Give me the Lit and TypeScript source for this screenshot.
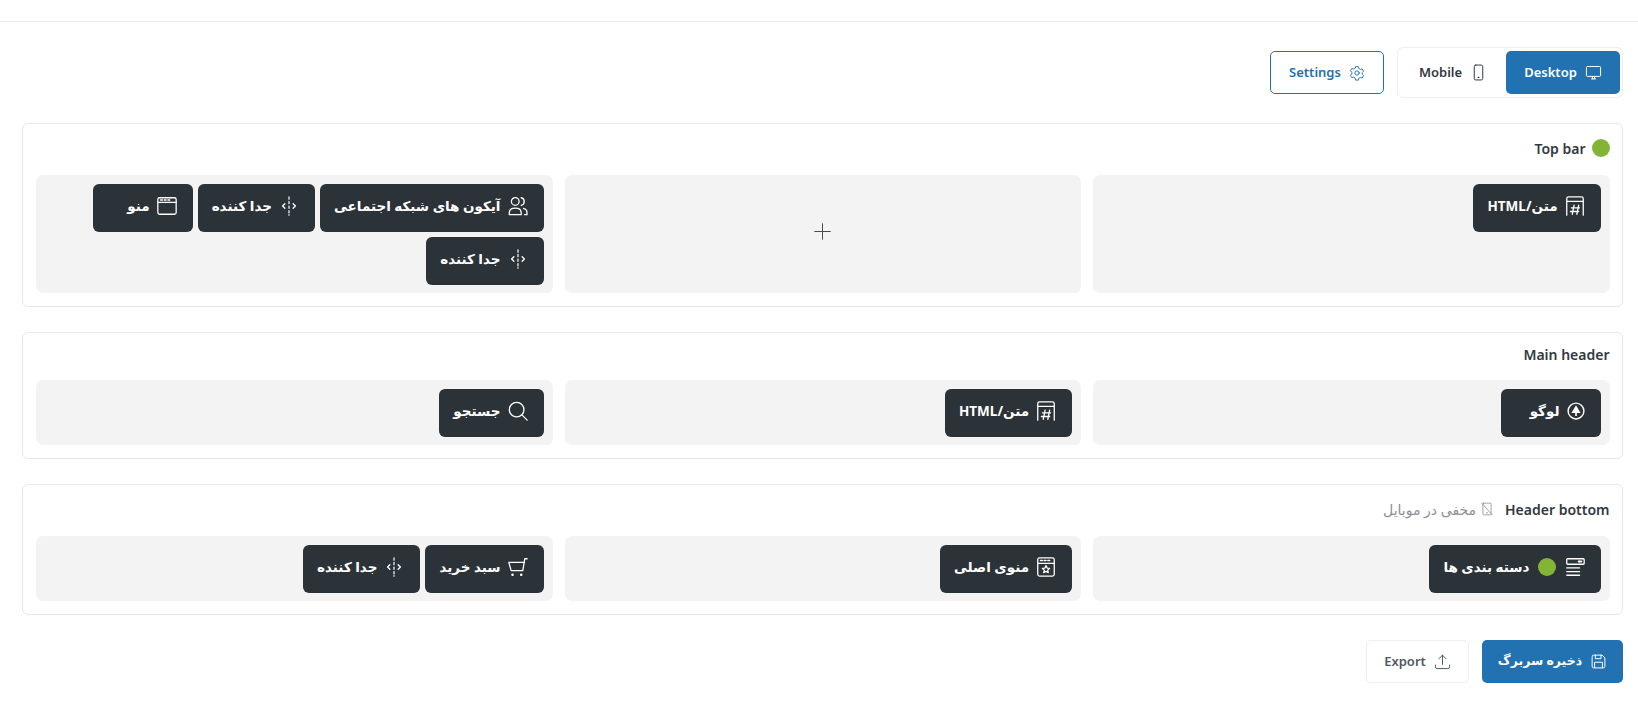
import { LitElement, html, css, svg, nothing } from 'lit';
import { customElement } from 'lit/decorators.js';

const icon = (body: unknown, size = 22) => html`
  <svg class="ico" width=${size} height=${size} viewBox="0 0 24 24" fill="none" stroke="currentColor" stroke-width="1.4" stroke-linecap="round" stroke-linejoin="round">${body}</svg>
`;

const icons: Record<string, unknown> = {
  hash: svg`<path d="M3 22V4a2 2 0 0 1 2-2h14a2 2 0 0 1 2 2v18M3 7h18"/><path d="M11 11l-2 10M16 11l-2 10M8 14h9M7 18h9"/>`,
  people: svg`<circle cx="9" cy="7" r="4.2"/><path d="M2.5 21.5v-2.2c0-3 2.4-5 6.5-5s6.5 2 6.5 5v2.2zM15.5 3a4.2 4.2 0 0 1 0 8.2M18 14.6c2.4.6 3.8 2.2 3.8 4.6v2.3h-2.6"/>`,
  divider: svg`<path d="M12 2v2.5M12 7v2.5M12 12v2.5M12 17v2.5M12 21.5v.5" stroke-width="1.3"/><path d="M7.5 9.5 5 12l2.5 2.5M16.5 9.5 19 12l-2.5 2.5"/>`,
  menu: svg`<rect x="2" y="3" width="20" height="18" rx="2"/><path d="M2 8h20"/><path d="M5 5.5h2M9 5.5h2M13 5.5h2" stroke-width="1.6"/>`,
  search: svg`<circle cx="10.5" cy="10.5" r="8"/><path d="M16.5 16.5 22 22"/>`,
  logo: svg`<circle cx="12" cy="12" r="9.5" stroke-width="1.7"/><path d="M12 5 17.5 14.5H13V18h-2v-3.5H6.5z" fill="currentColor" stroke="none"/>`,
  category: svg`<rect x="3" y="3" width="19" height="6" rx="1"/><path d="M16 6h3" stroke-width="2"/><path d="M3 13h14M3 17h14M3 21h14"/>`,
  star: svg`<rect x="3" y="2" width="18" height="20" rx="2"/><path d="M3 8h18"/><path d="M6 5h2M10 5h2M14 5h2" stroke-width="1.6"/><path d="m12 10.5 1.2 2.7 2.8.3-2.1 1.9.6 2.8-2.500-1.400-2.500 1.400.6-2.800-2.100-1.900 2.800-.3z"/>`,
  cart: svg`<path d="M22 3h-2.600L17.200 16H4.500L2 7h17"/><circle cx="6" cy="20.500" r=".7" fill="currentColor"/><circle cx="15.500" cy="20.500" r=".7" fill="currentColor"/>`,
  desktop: svg`<rect x="2" y="3.500" width="20" height="14" rx="1.500"/><path d="M9 21h6M10.500 17.500V21M13.500 17.500V21"/>`,
  mobile: svg`<rect x="6" y="1.500" width="12" height="21" rx="2"/><path d="M11.500 19h1" stroke-width="1.800"/>`,
  gear: svg`<circle cx="12" cy="12" r="3.200"/><path d="M10 2.500h4l.7 2.800 2.300 1.300 2.800-.8 2 3.400-2 2.100v2.600l2 2.100-2 3.400-2.800-.8-2.300 1.300-.7 2.800h-4l-.7-2.800L7 18.100l-2.800.8-2-3.400 2-2.100v-2.600l-2-2.100 2-3.400 2.800.8 2.300-1.300z"/>`,
  noMobile: svg`<rect x="5" y="2" width="14" height="20" rx="1"/><path d="M3 2l18 20M11 18.500h2"/>`,
  save: svg`<path d="M3 5a2 2 0 0 1 2-2h12l4 4v12a2 2 0 0 1-2 2H5a2 2 0 0 1-2-2z"/><path d="M7.500 3v5h8V3M6.500 21v-8h11v8"/>`,
  upload: svg`<path d="M12 16V3M7 8l5-5 5 5M2 17v2.500A2.500 2.500 0 0 0 4.500 22h15a2.500 2.500 0 0 0 2.500-2.500V17"/>`,
  plus: svg`<path d="M12 1v22M1 12h22"/>`,
};

type Chip = { label: string; icon: string; size?: number; dot?: boolean };

type Section = {
  title: string;
  dot?: boolean;
  note?: string;
  tall?: boolean;
  zones: Chip[][];
};

const divider: Chip = { label: 'جدا کننده', icon: 'divider' };

const sections: Section[] = [
  {
    title: 'Top bar',
    dot: true,
    tall: true,
    zones: [
      [{ label: 'متن/HTML', icon: 'hash' }],
      [],
      [{ label: 'آیکون های شبکه اجتماعی', icon: 'people' }, divider, { label: 'منو', icon: 'menu' }, divider],
    ],
  },
  {
    title: 'Main header',
    zones: [
      [{ label: 'لوگو', icon: 'logo', size: 20 }],
      [{ label: 'متن/HTML', icon: 'hash' }],
      [{ label: 'جستجو', icon: 'search' }],
    ],
  },
  {
    title: 'Header bottom',
    note: 'مخفی در موبایل',
    tall: true,
    zones: [
      [{ label: 'دسته بندی ها', icon: 'category', dot: true }],
      [{ label: 'منوی اصلی', icon: 'star' }],
      [{ label: 'سبد خرید', icon: 'cart' }, divider],
    ],
  },
];

@customElement('app-root')
export class AppRoot extends LitElement {
  static override styles = css`
    :host {
      display: block;
      height: 703px;
      background: #fff;
      color: #33383f;
      font-family: 'Noto Sans', 'DejaVu Sans', sans-serif;
      overflow: hidden;
    }
    .ico {
      flex: none;
      display: block;
    }
    .page {
      direction: rtl;
      border-top: 1px solid #e9eaec;
      margin-top: 21px;
      padding: 25px 15px 0 22px;
    }
    .toolbar {
      display: flex;
      align-items: center;
      gap: 13px;
      margin-bottom: 25px;
    }
    .segment {
      display: flex;
      padding: 3px 2px;
      height: 51px;
      box-sizing: border-box;
      border: 1px solid #eceef0;
      border-radius: 6px;
    }
    .btn {
      display: flex;
      align-items: center;
      justify-content: center;
      gap: 8px;
      box-sizing: border-box;
      height: 43px;
      border-radius: 5px;
      font-size: 13px;
      font-weight: 600;
      line-height: 1;
    }
    .seg-btn {
      width: 106px;
    }
    .seg-btn.active {
      width: 114px;
      background: #2271b1;
      color: #fff;
    }
    .settings {
      width: 114px;
      border: 1px solid #2271b1;
      color: #2271b1;
    }
    .section {
      border: 1px solid #e6e7e9;
      border-radius: 6px;
      padding: 13px 12.5px 13px 13px;
      margin-bottom: 25px;
    }
    .head {
      display: flex;
      align-items: center;
      gap: 6px;
      height: 34px;
      padding-bottom: 18px;
      box-sizing: border-box;
      font-size: 14px;
      font-weight: 600;
    }
    .head.tall {
      height: 38px;
      padding-bottom: 16px;
    }
    .dot {
      width: 18px;
      height: 18px;
      border-radius: 50%;
      background: #82b536;
      flex: none;
    }
    .note {
      display: flex;
      align-items: center;
      gap: 4px;
      margin-right: 5px;
      color: #8c9096;
      font-size: 14px;
      font-weight: 400;
    }
    .zones {
      display: grid;
      grid-template-columns: repeat(3, 1fr);
      gap: 12px;
    }
    .zone {
      display: flex;
      flex-wrap: wrap;
      align-content: flex-start;
      gap: 5px;
      padding: 9px 9px 8px;
      background: #f3f3f3;
      border-radius: 7px;
    }
    .zone.empty {
      align-items: center;
      justify-content: center;
      align-content: center;
      padding-bottom: 14px;
      color: #444b48;
    }
    .chip {
      display: flex;
      align-items: center;
      gap: 6px;
      height: 48px;
      min-width: 100px;
      box-sizing: border-box;
      padding: 0 15px 4px 14px;
      background: #2c3338;
      color: #fff;
      border-radius: 6px;
      font-size: 13.5px;
      font-weight: 700;
      white-space: nowrap;
    }
    .chip .dot {
      margin: 0 2px;
    }
    .footer {
      display: flex;
      gap: 13px;
    }
    .save {
      width: 141px;
      background: #2271b1;
      color: #fff;
      font-size: 12.5px;
      font-weight: 700;
    }
    .export {
      width: 103px;
      border: 1px solid #eceef0;
      color: #50575e;
    }
  `;

  renderChip(c: Chip) {
    return html`
      <div class="chip">
        ${icon(icons[c.icon], c.size ?? 22)}
        ${c.dot ? html`<span class="dot"></span>` : nothing}
        <span>${c.label}</span>
      </div>
    `;
  }

  renderSection(s: Section) {
    return html`
      <section class="section">
        <div class="head ${s.tall ? 'tall' : ''}">
          ${s.dot ? html`<span class="dot"></span>` : nothing}
          <span dir="ltr">${s.title}</span>
          ${s.note
            ? html`<span class="note">${icon(icons.noMobile, 14)}<span>${s.note}</span></span>`
            : nothing}
        </div>
        <div class="zones">
          ${s.zones.map((z) =>
            z.length
              ? html`<div class="zone">${z.map((c) => this.renderChip(c))}</div>`
              : html`<div class="zone empty">${icon(icons.plus, 17)}</div>`
          )}
        </div>
      </section>
    `;
  }

  override render() {
    return html`
      <div class="page">
        <div class="toolbar">
          <div class="segment">
            <div class="btn seg-btn active">${icon(icons.desktop, 17)}<span>Desktop</span></div>
            <div class="btn seg-btn">${icon(icons.mobile, 17)}<span>Mobile</span></div>
          </div>
          <div class="btn settings">${icon(icons.gear, 16)}<span>Settings</span></div>
        </div>
        ${sections.map((s) => this.renderSection(s))}
        <div class="footer">
          <div class="btn save">${icon(icons.save, 17)}<span>ذخیره سربرگ</span></div>
          <div class="btn export">${icon(icons.upload, 17)}<span>Export</span></div>
        </div>
      </div>
    `;
  }
}

declare global {
  interface HTMLElementTagNameMap {
    'app-root': AppRoot;
  }
}
